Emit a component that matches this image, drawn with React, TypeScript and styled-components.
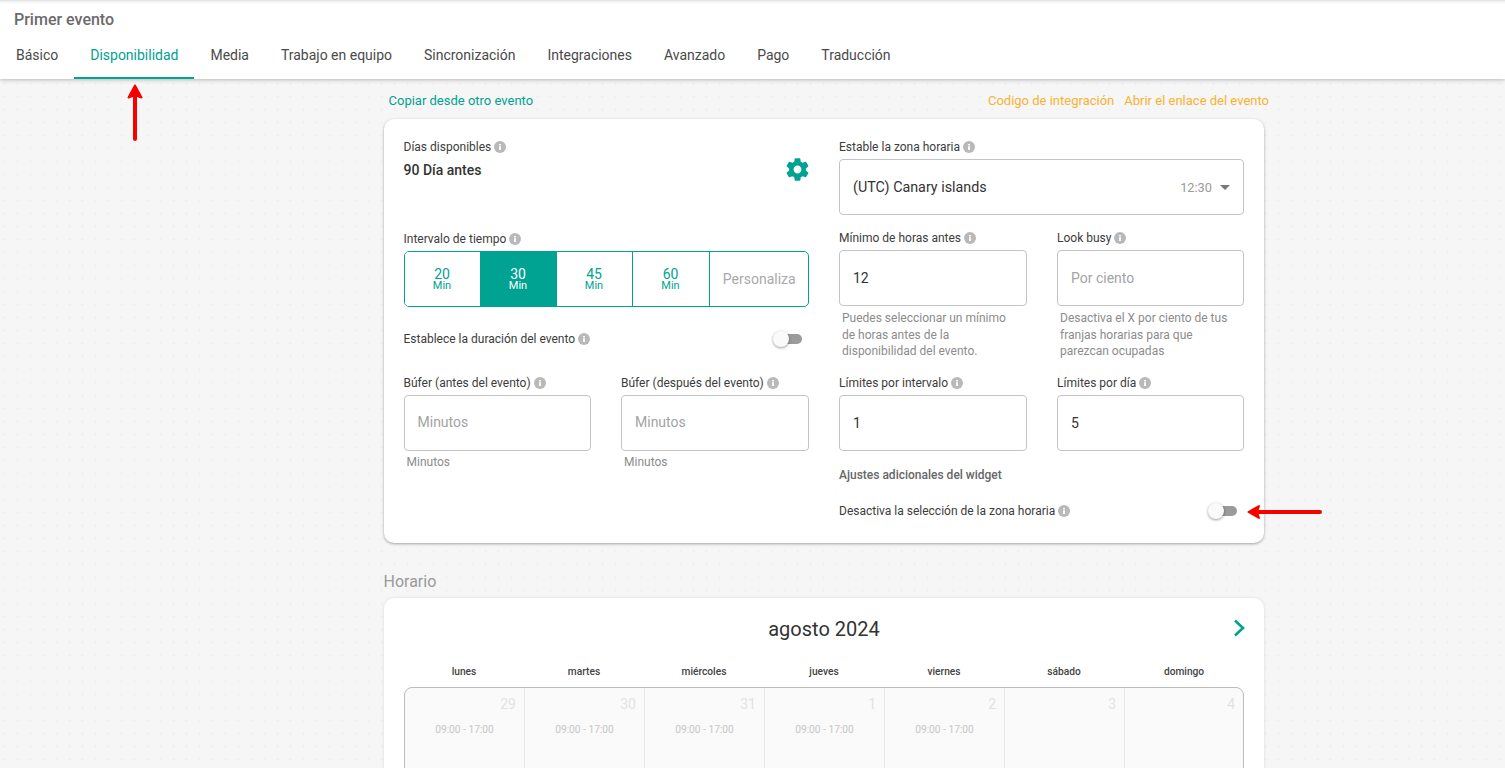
import { FC, ReactNode } from "react";
import styled, { createGlobalStyle } from "styled-components";

const GlobalStyle = createGlobalStyle`
  html, body {
    margin: 0;
    height: 768px;
    overflow: hidden;
    background-color: #f6f6f6;
    font-family: Roboto, "Liberation Sans", sans-serif;
    color: #333;
  }
  * {
    box-sizing: border-box;
  }
`;

const TEAL = "#00a291";
const ARROW_RED = "#f60000";

const tabs = [
  "Básico",
  "Disponibilidad",
  "Media",
  "Trabajo en equipo",
  "Sincronización",
  "Integraciones",
  "Avanzado",
  "Pago",
  "Traducción",
];

const intervals = ["20", "30", "45", "60"];

const weekDays = ["lunes", "martes", "miércoles", "jueves", "viernes", "sábado", "domingo"];

const days = [
  { day: 29, hours: true },
  { day: 30, hours: true },
  { day: 31, hours: true },
  { day: 1, hours: true },
  { day: 2, hours: true },
  { day: 3, hours: false },
  { day: 4, hours: false },
];

const InfoIcon: FC = () => (
  <InfoBadge viewBox="0 0 12 12">
    <circle cx="6" cy="6" r="6" fill="#b9b9b9" />
    <rect x="5.1" y="5.2" width="1.8" height="3.8" fill="#fff" />
    <rect x="5.1" y="3" width="1.8" height="1.5" fill="#fff" />
  </InfoBadge>
);

const Label: FC<{ children: ReactNode }> = ({ children }) => (
  <LabelRow>
    <span>{children}</span>
    <InfoIcon />
  </LabelRow>
);

const Toggle: FC = () => (
  <ToggleTrack>
    <ToggleKnob />
  </ToggleTrack>
);

const App: FC = () => {
  return (
    <>
      <GlobalStyle />
      <Page>
        <Header>
          <EventTitle>Primer evento</EventTitle>
          <TabBar>
            {tabs.map((tab) => (
              <Tab key={tab} $active={tab === "Disponibilidad"}>
                {tab}
              </Tab>
            ))}
          </TabBar>
        </Header>

        <Content>
          <LinkRow>
            <TealLink>Copiar desde otro evento</TealLink>
            <OrangeLinks>
              <span>Codigo de integración</span>
              <span>Abrir el enlace del evento</span>
            </OrangeLinks>
          </LinkRow>

          <Card>
            <Column>
              <AvailableDays>
                <div>
                  <Label>Días disponibles</Label>
                  <DaysValue>90 Día antes</DaysValue>
                </div>
                <GearIcon viewBox="0 0 24 24">
                  <path
                    fill={TEAL}
                    d="M19.43 12.98c.04-.32.07-.64.07-.98s-.03-.66-.07-.98l2.11-1.65c.19-.15.24-.42.12-.64l-2-3.46c-.12-.22-.39-.3-.61-.22l-2.49 1c-.52-.4-1.08-.73-1.69-.98l-.38-2.65C14.46 2.18 14.25 2 14 2h-4c-.25 0-.46.18-.49.42l-.38 2.65c-.61.25-1.17.59-1.69.98l-2.49-1c-.23-.09-.49 0-.61.22l-2 3.46c-.13.22-.07.49.12.64l2.11 1.65c-.04.32-.07.65-.07.98s.03.66.07.98l-2.11 1.65c-.19.15-.24.42-.12.64l2 3.46c.12.22.39.3.61.22l2.49-1c.52.4 1.08.73 1.69.98l.38 2.65c.03.24.24.42.49.42h4c.25 0 .46-.18.49-.42l.38-2.65c.61-.25 1.17-.59 1.69-.98l2.49 1c.23.09.49 0 .61-.22l2-3.46c.12-.22.07-.49-.12-.64l-2.11-1.65zM12 15.5c-1.93 0-3.5-1.57-3.5-3.5s1.57-3.5 3.5-3.5 3.5 1.57 3.5 3.5-1.57 3.5-3.5 3.5z"
                  />
                </GearIcon>
              </AvailableDays>

              <IntervalBlock>
                <Label>Intervalo de tiempo</Label>
                <Segments>
                  {intervals.map((value) => (
                    <Segment key={value} $active={value === "30"}>
                      <SegmentValue>{value}</SegmentValue>
                      <SegmentUnit>Min</SegmentUnit>
                    </Segment>
                  ))}
                  <CustomSegment>Personaliza</CustomSegment>
                </Segments>
              </IntervalBlock>

              <DurationRow>
                <Label>Establece la duración del evento</Label>
                <Toggle />
              </DurationRow>

              <TwoFields>
                <Field>
                  <Label>Búfer (antes del evento)</Label>
                  <BufferInput $empty>Minutos</BufferInput>
                  <BufferHint>Minutos</BufferHint>
                </Field>
                <Field>
                  <Label>Búfer (después del evento)</Label>
                  <BufferInput $empty>Minutos</BufferInput>
                  <BufferHint>Minutos</BufferHint>
                </Field>
              </TwoFields>
            </Column>

            <Column>
              <Field>
                <Label>Estable la zona horaria</Label>
                <SelectBox>
                  <span>(UTC) Canary islands</span>
                  <SelectEnd>
                    <span>12:30</span>
                    <Caret />
                  </SelectEnd>
                </SelectBox>
              </Field>

              <MiddleFields>
                <Field>
                  <Label>Mínimo de horas antes</Label>
                  <InputBox>12</InputBox>
                  <Hint>Puedes seleccionar un mínimo de horas antes de la disponibilidad del evento.</Hint>
                </Field>
                <Field>
                  <Label>Look busy</Label>
                  <InputBox $empty>Por ciento</InputBox>
                  <Hint>Desactiva el X por ciento de tus franjas horarias para que parezcan ocupadas</Hint>
                </Field>
              </MiddleFields>

              <LimitFields>
                <Field>
                  <Label>Límites por intervalo</Label>
                  <InputBox>1</InputBox>
                </Field>
                <Field>
                  <Label>Límites por día</Label>
                  <InputBox>5</InputBox>
                </Field>
              </LimitFields>

              <ExtraTitle>Ajustes adicionales del widget</ExtraTitle>
              <WidgetRow>
                <Label>Desactiva la selección de la zona horaria</Label>
                <Toggle />
                <SideArrow viewBox="0 0 76 18">
                  <path
                    d="M74 9H8"
                    fill="none"
                    stroke={ARROW_RED}
                    strokeWidth="4"
                    strokeLinecap="round"
                  />
                  <path
                    d="M2.5 9 13 3 11 9l2 6z"
                    fill={ARROW_RED}
                    stroke={ARROW_RED}
                    strokeWidth="2"
                    strokeLinejoin="round"
                  />
                </SideArrow>
              </WidgetRow>
            </Column>
          </Card>

          <SectionTitle>Horario</SectionTitle>
          <CalendarCard>
            <MonthRow>
              <MonthName>agosto 2024</MonthName>
              <NextIcon viewBox="0 0 12 18">
                <path d="M2 1.5 10 9l-8 7.5" fill="none" stroke={TEAL} strokeWidth="2.6" />
              </NextIcon>
            </MonthRow>
            <WeekRow>
              {weekDays.map((name) => (
                <WeekDay key={name}>{name}</WeekDay>
              ))}
            </WeekRow>
            <DayGrid>
              {days.map(({ day, hours }) => (
                <DayCell key={day}>
                  <DayNumber>{day}</DayNumber>
                  {hours && <DayHours>09:00 - 17:00</DayHours>}
                </DayCell>
              ))}
            </DayGrid>
          </CalendarCard>
        </Content>

        <UpArrow viewBox="0 0 18 58">
          <path d="M9 56V12" fill="none" stroke={ARROW_RED} strokeWidth="4" strokeLinecap="round" />
          <path
            d="M9 2.5 15.5 14.5 9 12 2.5 14.5z"
            fill={ARROW_RED}
            stroke={ARROW_RED}
            strokeWidth="2"
            strokeLinejoin="round"
          />
        </UpArrow>
      </Page>
    </>
  );
};

const Page = styled.div`
  position: relative;
  height: 768px;
  overflow: hidden;
  background-color: #f6f6f6;
  background-image: radial-gradient(circle, #f0f0f0 1px, transparent 1.2px);
  background-size: 13px 13px;
  background-position: -2px -1px;
`;

const Header = styled.header`
  height: 79px;
  background: linear-gradient(#dedede, #f6f6f6 2px, #fff 4px);
  box-shadow: 0 1px 4px rgba(0, 0, 0, 0.25);
`;

const EventTitle = styled.div`
  padding: 10px 0 0 14px;
  height: 35px;
  font-size: 16px;
  line-height: 19px;
  font-weight: 500;
  color: #6b6b6b;
`;

const TabBar = styled.nav`
  display: flex;
  height: 44px;
`;

const Tab = styled.div<{ $active?: boolean }>`
  padding: 0 16px;
  font-size: 13.99px;
  line-height: 40px;
  color: ${(props) => (props.$active ? TEAL : "#4a4a4a")};
  border-bottom: 2px solid ${(props) => (props.$active ? TEAL : "transparent")};
`;

const Content = styled.main`
  width: 880px;
  margin: 0 0 0 384px;
`;

const LinkRow = styled.div`
  display: flex;
  justify-content: space-between;
  height: 40px;
  margin-right: -5px;
  padding: 14px 0 0 4.5px;
  font-size: 13px;
  line-height: 15px;
`;

const TealLink = styled.span`
  color: ${TEAL};
`;

const OrangeLinks = styled.div`
  display: flex;
  gap: 10px;
  color: #f9b233;
`;

const Card = styled.section`
  display: grid;
  grid-template-columns: 405.5px 405px;
  column-gap: 30px;
  height: 424px;
  padding: 21px 20px 20px 19.5px;
  background: #fff;
  border-radius: 10px;
  box-shadow: 0 1px 3px rgba(0, 0, 0, 0.35);
`;

const Column = styled.div`
  display: flex;
  flex-direction: column;
`;

const LabelRow = styled.div`
  display: flex;
  align-items: center;
  gap: 3px;
  height: 14px;
  font-size: 12px;
  line-height: 14px;
  color: #3c3c3c;
`;

const InfoBadge = styled.svg`
  width: 12px;
  height: 12px;
  flex: none;
`;

const AvailableDays = styled.div`
  display: flex;
  justify-content: space-between;
  height: 92px;
`;

const DaysValue = styled.div`
  margin-top: 8px;
  font-size: 14px;
  line-height: 16px;
  font-weight: 500;
  color: #333;
`;

const GearIcon = styled.svg`
  width: 27px;
  height: 27px;
  margin: 16px -2px 0 0;
`;

const IntervalBlock = styled.div`
  display: flex;
  flex-direction: column;
  gap: 5px;
`;

const Segments = styled.div`
  display: flex;
  height: 56px;
  border: 1px solid ${TEAL};
  border-radius: 5px;
  overflow: hidden;
`;

const Segment = styled.div<{ $active?: boolean }>`
  width: 76px;
  flex: none;
  display: flex;
  flex-direction: column;
  align-items: center;
  justify-content: center;
  padding-top: 1px;
  background: ${(props) => (props.$active ? TEAL : "#fff")};
  color: ${(props) => (props.$active ? "#fff" : TEAL)};
  border-right: 1px solid ${TEAL};

  &:nth-child(4) {
    width: 77px;
  }
`;

const SegmentValue = styled.span`
  font-size: 14px;
  line-height: 12px;
`;

const SegmentUnit = styled.span`
  font-size: 11px;
  line-height: 11px;
`;

const CustomSegment = styled.div`
  flex: 1;
  display: flex;
  align-items: center;
  justify-content: center;
  padding-left: 1px;
  font-size: 14px;
  color: #a9a9a9;
`;

const DurationRow = styled.div`
  display: flex;
  align-items: center;
  justify-content: space-between;
  height: 20px;
  margin-top: 22px;
  padding-right: 7px;
`;

const ToggleTrack = styled.div`
  position: relative;
  width: 25px;
  height: 10px;
  border-radius: 5px;
  background: #9b9b9b;
`;

const ToggleKnob = styled.div`
  position: absolute;
  left: -4px;
  top: -3px;
  width: 16px;
  height: 16px;
  border-radius: 50%;
  background: #fafafa;
  box-shadow: 0 1px 3px rgba(0, 0, 0, 0.4);
`;

const TwoFields = styled.div`
  display: grid;
  grid-template-columns: 187.5px 188px;
  column-gap: 30px;
  margin-top: 27px;
`;

const Field = styled.div`
  display: flex;
  flex-direction: column;
  gap: 5px;
`;

const InputBox = styled.div<{ $empty?: boolean }>`
  height: 56px;
  padding: 0 13px;
  display: flex;
  align-items: center;
  font-size: 14px;
  color: ${(props) => (props.$empty ? "#a3a3a3" : "#333")};
  border: 1px solid #c4c4c4;
  border-radius: 4px;
  background: #fff;
`;

const BufferInput = styled(InputBox)`
  padding-bottom: 2px;
`;

const BufferHint = styled.div`
  margin: -1px 0 0 3px;
  font-size: 12px;
  line-height: 14px;
  color: #8c8c8c;
`;

const SelectBox = styled.div`
  height: 56px;
  padding: 0 13px;
  display: flex;
  align-items: center;
  justify-content: space-between;
  font-size: 14.3px;
  color: #333;
  border: 1px solid #c4c4c4;
  border-radius: 4px;
`;

const SelectEnd = styled.div`
  display: flex;
  align-items: center;
  gap: 8px;
  font-size: 12.8px;
  color: #9a9a9a;
`;

const Caret = styled.span`
  width: 0;
  height: 0;
  border-left: 5px solid transparent;
  border-right: 5px solid transparent;
  border-top: 5px solid #777;
`;

const MiddleFields = styled.div`
  display: grid;
  grid-template-columns: 188px 187px;
  column-gap: 30px;
  margin-top: 16px;
  height: 127px;
`;

const Hint = styled.div`
  margin: -1px 10px 0 3px;
  font-size: 12px;
  line-height: 16.5px;
  color: #8c8c8c;
`;

const LimitFields = styled(MiddleFields)`
  height: 75px;
  margin-top: 18px;
`;

const ExtraTitle = styled.div`
  margin-top: 17px;
  font-size: 12px;
  line-height: 14px;
  font-weight: 500;
  color: #666;
`;

const WidgetRow = styled.div`
  position: relative;
  display: flex;
  align-items: center;
  justify-content: space-between;
  height: 20px;
  margin-top: 19px;
  padding-right: 7px;
`;

const SideArrow = styled.svg`
  position: absolute;
  left: 407px;
  top: 2px;
  width: 76px;
  height: 18px;
`;

const UpArrow = styled.svg`
  position: absolute;
  left: 126px;
  top: 83px;
  width: 18px;
  height: 58px;
`;

const SectionTitle = styled.div`
  margin-top: 30px;
  height: 25px;
  margin-left: -0.5px;
  font-size: 16px;
  line-height: 18px;
  color: #9a9a9a;
`;

const CalendarCard = styled.section`
  padding: 0 20px;
  height: 300px;
  background: #fff;
  border-radius: 10px;
  box-shadow: 0 0 3px rgba(0, 0, 0, 0.12);
`;

const MonthRow = styled.div`
  position: relative;
  display: flex;
  justify-content: center;
  align-items: center;
  height: 60px;
  padding-top: 2px;
`;

const MonthName = styled.div`
  font-size: 20px;
  line-height: 24px;
  color: #333;
`;

const NextIcon = styled.svg`
  position: absolute;
  right: -1px;
  top: 21px;
  width: 12px;
  height: 18px;
`;

const WeekRow = styled.div`
  display: grid;
  grid-template-columns: repeat(7, 1fr);
  height: 29px;
  padding-top: 7px;
`;

const WeekDay = styled.div`
  text-align: center;
  font-size: 10.2px;
  line-height: 13px;
  font-weight: 500;
  color: #444;
`;

const DayGrid = styled.div`
  display: grid;
  grid-template-columns: repeat(7, 120px);
  height: 160px;
  border: 1px solid #bcbcbc;
  border-radius: 8px 8px 0 0;
  overflow: hidden;
  background: #fafafa;
`;

const DayCell = styled.div`
  display: flex;
  flex-direction: column;
  padding: 7px 8px 0;
  border-right: 1px solid #e8e8e8;

  &:last-child {
    border-right: none;
    padding-right: 10px;
  }
`;

const DayNumber = styled.div`
  text-align: right;
  font-size: 14px;
  line-height: 18px;
  color: #e2e2e2;
`;

const DayHours = styled.div`
  margin-top: 11px;
  text-align: center;
  font-size: 10.2px;
  line-height: 12px;
  color: #c6c6c6;
`;

export default App;
